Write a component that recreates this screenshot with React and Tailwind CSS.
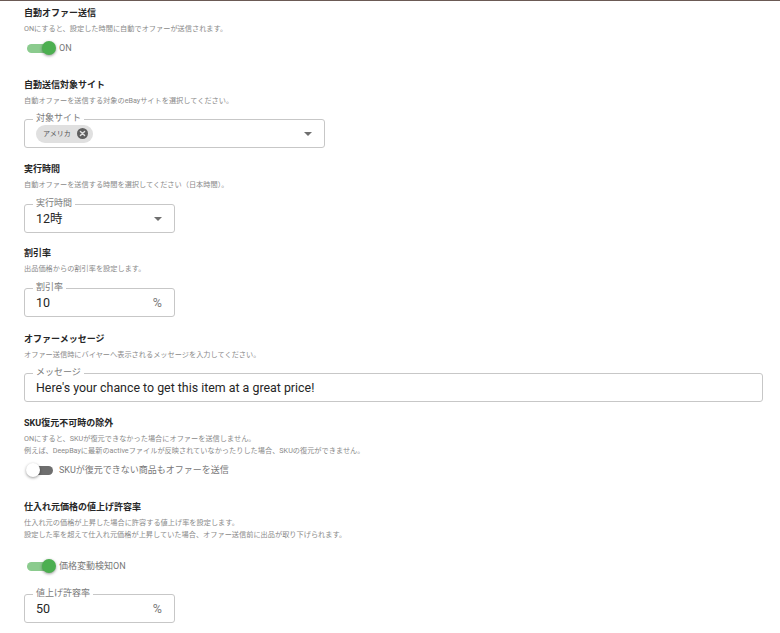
import React from "react";

const FONT = "font-[Roboto,'Noto_Sans_CJK_JP',sans-serif]";

function Title({ children }) {
  return <div className="h-[12px] text-[9px] leading-[12px] font-bold text-[#262626] whitespace-nowrap">{children}</div>;
}

function Desc({ children }) {
  return <div className="mt-[4px] text-[7.2px] leading-[12px] text-[#8a8a8a] whitespace-nowrap">{children}</div>;
}

function Arrow() {
  return (
    <svg width="8" height="4" viewBox="0 0 8 4" className="shrink-0">
      <path d="M0 0 L8 0 L4 4 Z" fill="#6f6f6f" />
    </svg>
  );
}

function Outlined({ label, className = "", children }) {
  return (
    <div className={`relative h-[29px] rounded-[3px] border border-[#c7c7c7] flex items-center ${className}`}>
      <span className="absolute left-[8px] top-[-7px] bg-white px-[3px] text-[9px] leading-[10px] text-[#7a7a7a] whitespace-nowrap">
        {label}
      </span>
      {children}
    </div>
  );
}

function Toggle({ on, label }) {
  return (
    <div className="ml-[2px] h-[20px] flex items-center">
      <div className="relative w-[30px] h-[14px] flex items-center">
        <div className={`ml-[1px] h-[9px] rounded-full ${on ? "w-[25px] bg-[#8bcb8e]" : "w-[26px] bg-[#6e6e6e]"}`} />
        <div
          className={`absolute top-0 w-[14px] h-[14px] rounded-full shadow-[0_1px_3px_rgba(0,0,0,0.4)] ${
            on ? "left-[16px] bg-[#4caf50]" : "left-0 bg-white"
          }`}
        />
      </div>
      <span className="ml-[3px] text-[9px] leading-[12px] text-[#777777] whitespace-nowrap">{label}</span>
    </div>
  );
}

function CloseCircle() {
  return (
    <svg width="11" height="11" viewBox="0 0 11 11" className="shrink-0">
      <circle cx="5.5" cy="5.5" r="5.5" fill="#5f5f5f" />
      <path d="M3.4 3.4 L7.6 7.6 M7.6 3.4 L3.4 7.6" stroke="#e0e0e0" strokeWidth="1.4" strokeLinecap="round" />
    </svg>
  );
}

export default function App() {
  return (
    <div className={`${FONT} bg-white w-[780px] h-[633px] overflow-hidden border-t border-[#6b5a55] pt-[6px] pl-[24px] pr-[17px]`}>
      {/* S1 */}
      <Title>自動オファー送信</Title>
      <Desc>ONにすると、設定した時間に自動でオファーが送信されます。</Desc>
      <div className="mt-[3px]">
        <Toggle on label="ON" />
      </div>

      {/* S2 */}
      <div className="mt-[21px]">
        <Title>自動送信対象サイト</Title>
        <Desc>自動オファーを送信する対象のeBayサイトを選択してください。</Desc>
        <Outlined label="対象サイト" className="mt-[12px] w-[301px] justify-between pl-[11px] pr-[12px]">
          <div className="h-[18px] rounded-full bg-[#e0e0e0] flex items-center pl-[7px] pr-[5px] gap-[6px]">
            <span className="text-[7px] leading-[10px] text-[#555555]">アメリカ</span>
            <CloseCircle />
          </div>
          <Arrow />
        </Outlined>
      </div>

      {/* S3 */}
      <div className="mt-[15px]">
        <Title>実行時間</Title>
        <Desc>自動オファーを送信する時間を選択してください（日本時間）。</Desc>
        <Outlined label="実行時間" className="mt-[13px] w-[151px] justify-between pl-[11px] pr-[12px]">
          <span className="text-[12.5px] leading-[16px] text-[#262626]">12時</span>
          <Arrow />
        </Outlined>
      </div>

      {/* S4 */}
      <div className="mt-[14px]">
        <Title>割引率</Title>
        <Desc>出品価格からの割引率を設定します。</Desc>
        <Outlined label="割引率" className="mt-[13px] w-[151px] justify-between pl-[11px] pr-[12px]">
          <span className="text-[12.5px] leading-[16px] text-[#262626]">10</span>
          <span className="text-[12.5px] leading-[16px] text-[#7a7a7a]">%</span>
        </Outlined>
      </div>

      {/* S5 */}
      <div className="mt-[16px]">
        <Title>オファーメッセージ</Title>
        <Desc>オファー送信時にバイヤーへ表示されるメッセージを入力してください。</Desc>
        <Outlined label="メッセージ" className="mt-[12px] w-full pl-[11px] pr-[12px]">
          <span className="text-[12.4px] leading-[16px] text-[#262626] whitespace-nowrap">
            Here's your chance to get this item at a great price!
          </span>
        </Outlined>
      </div>

      {/* S6 */}
      <div className="mt-[15px]">
        <Title>SKU復元不可時の除外</Title>
        <Desc>
          ONにすると、SKUが復元できなかった場合にオファーを送信しません。
          <br />
          例えば、DeepBayに最新のactiveファイルが反映されていなかったりした場合、SKUの復元ができません。
        </Desc>
        <div className="mt-[3px]">
          <Toggle on={false} label="SKUが復元できない商品もオファーを送信" />
        </div>
      </div>

      {/* S7 */}
      <div className="mt-[21px]">
        <Title>仕入れ元価格の値上げ許容率</Title>
        <Desc>
          仕入れ元の価格が上昇した場合に許容する値上げ率を設定します。
          <br />
          設定した率を超えて仕入れ元価格が上昇していた場合、オファー送信前に出品が取り下げられます。
        </Desc>
        <div className="mt-[15px]">
          <Toggle on label="価格変動検知ON" />
        </div>
        <Outlined label="値上げ許容率" className="mt-[18px] w-[151px] justify-between pl-[11px] pr-[12px]">
          <span className="text-[12.5px] leading-[16px] text-[#262626]">50</span>
          <span className="text-[12.5px] leading-[16px] text-[#7a7a7a]">%</span>
        </Outlined>
      </div>
    </div>
  );
}
